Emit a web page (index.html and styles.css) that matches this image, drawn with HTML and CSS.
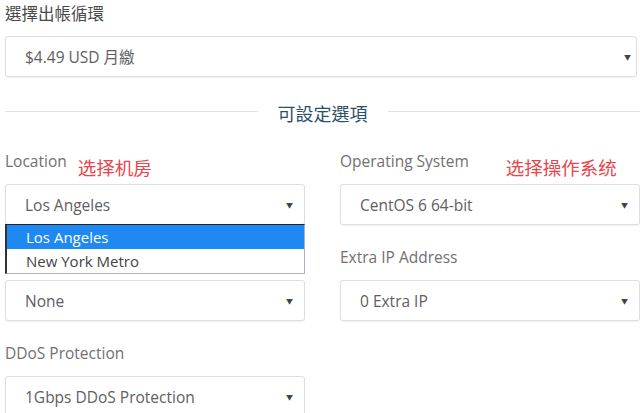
FILE: index.html
```html
<!DOCTYPE html>
<html lang="zh-Hant">
<head>
    <meta charset="UTF-8">
    <meta name="viewport" content="width=device-width, initial-scale=1.0">
    <title>可設定選項</title>
    <link rel="stylesheet" href="styles.css">
</head>
<body>
    <div class="form-group">
        <div class="label-row"><span class="label cjk">選擇出帳循環</span></div>
        <div class="select-box wide">
            <span>$4.49 USD 月繳</span>
            <span class="arrow">&#9660;</span>
        </div>
    </div>

    <!-- 可設定選項 -->
    <div class="divider">
        <span class="divider-line"></span>
        <span class="divider-text">可設定選項</span>
        <span class="divider-line"></span>
    </div>

    <div class="options-grid">
        <div class="column">
            <div class="form-group has-menu">
                <div class="label-row">
                    <span class="label">Location</span>
                    <span class="note note-left">选择机房</span>
                </div>
                <div class="select-box">
                    <span>Los Angeles</span>
                    <span class="arrow">&#9660;</span>
                </div>
                <ul class="dropdown">
                    <li class="selected">Los Angeles</li>
                    <li>New York Metro</li>
                </ul>
            </div>
            <div class="form-group">
                <div class="label-row"></div>
                <div class="select-box">
                    <span>None</span>
                    <span class="arrow">&#9660;</span>
                </div>
            </div>
            <div class="form-group">
                <div class="label-row"><span class="label">DDoS Protection</span></div>
                <div class="select-box">
                    <span>1Gbps DDoS Protection</span>
                    <span class="arrow">&#9660;</span>
                </div>
            </div>
        </div>

        <div class="column">
            <div class="form-group">
                <div class="label-row">
                    <span class="label">Operating System</span>
                    <span class="note note-right">选择操作系统</span>
                </div>
                <div class="select-box">
                    <span>CentOS 6 64-bit</span>
                    <span class="arrow">&#9660;</span>
                </div>
            </div>
            <div class="form-group">
                <div class="label-row"><span class="label">Extra IP Address</span></div>
                <div class="select-box">
                    <span>0 Extra IP</span>
                    <span class="arrow">&#9660;</span>
                </div>
            </div>
        </div>
    </div>
</body>
</html>
```

FILE: styles.css
```css
body {
    font-family: "Open Sans", "Noto Sans CJK TC", sans-serif;
    margin: 0;
    padding: 2px 0 0 5px;
    background-color: #fff;
    color: #555;
    overflow: hidden;
    height: 413px;
    box-sizing: border-box;
}
.form-group {
    position: relative;
    margin-bottom: 21px;
}
.label-row {
    display: flex;
    align-items: flex-start;
    height: 22px;
    line-height: 22px;
    margin-bottom: 12px;
    white-space: nowrap;
}
.label {
    font-size: 15.5px;
    color: #707070;
}
.label.cjk {
    font-family: "Noto Sans CJK TC", sans-serif;
    font-size: 16.5px;
    color: #4a4a4a;
}
.note {
    font-family: "Noto Sans CJK SC", sans-serif;
    font-size: 18.5px;
    color: #e8454c;
    padding-top: 6px;
}
.note-left {
    margin-left: 11px;
}
.note-right {
    margin-left: 37px;
}
.select-box {
    display: flex;
    justify-content: space-between;
    align-items: center;
    box-sizing: border-box;
    width: 300px;
    height: 41px;
    padding: 0 11px 0 19px;
    border: 1px solid #dedede;
    border-radius: 3px;
    box-shadow: 0 1px 2px rgba(0, 0, 0, 0.06);
    font-size: 15.5px;
    color: #606060;
    background-color: #fff;
}
.select-box.wide {
    width: 632px;
    padding-right: 5px;
}
.arrow {
    font-size: 7px;
    color: #444;
}
.divider {
    display: flex;
    align-items: center;
    gap: 20px;
    height: 26px;
    margin: 1px 0 26px;
}
.divider-line {
    flex: 1;
    height: 1px;
    background-color: #e2e2e2;
}
.divider-text {
    font-family: "Noto Sans CJK TC", sans-serif;
    font-size: 18px;
    color: #2c4f6b;
    padding-top: 3px;
}
.options-grid {
    display: grid;
    grid-template-columns: 300px 300px;
    column-gap: 35px;
}
.dropdown {
    position: absolute;
    top: 74px;
    left: 0;
    width: 300px;
    margin: 0;
    padding: 0;
    list-style: none;
    background-color: #fff;
    border: 1px solid #a9b4c0;
    border-top-color: #222;
    border-left: 2px solid #333;
    box-sizing: border-box;
    z-index: 2;
}
.dropdown li {
    height: 24px;
    line-height: 24px;
    padding-left: 19px;
    font-size: 15px;
    color: #444;
}
.dropdown li.selected {
    background-color: #1e88f3;
    color: #fff;
}
```
